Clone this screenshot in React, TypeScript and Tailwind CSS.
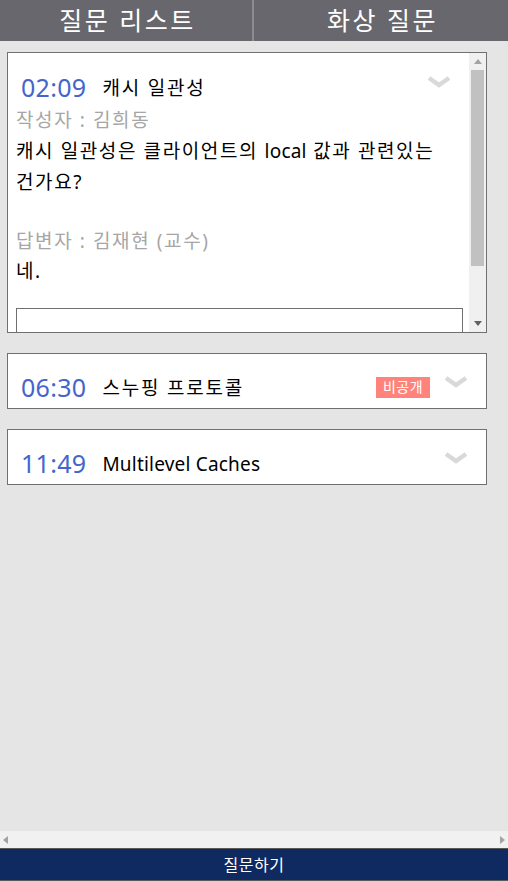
import React from 'react'

const font = { fontFamily: '"Noto Sans", "Noto Sans CJK KR", sans-serif' }

function Chevron() {
  return (
    <svg width="24" height="14" viewBox="0 0 24 14" className="shrink-0">
      <path d="M2 3 L12 10 L22 3" fill="none" stroke="#d9d9d9" strokeWidth="4.5" strokeLinejoin="miter" />
    </svg>
  )
}

function Badge() {
  return (
    <span className="inline-flex items-center justify-center h-[21px] w-[54px] bg-[#ff837a] text-white text-[14px] leading-none tracking-[0.5px]">
      비공개
    </span>
  )
}

function HeadRow({ time, title, secret, latin }: { time: string; title: string; secret?: boolean; latin?: boolean }) {
  return (
    <div className="flex items-center h-[32px]">
      <span className="text-[25px] text-[#4466cc] leading-none ml-[5px] tracking-[0.3px]">{time}</span>
      <span className={latin ? 'text-[19px] text-black ml-[16px] mt-[3px] tracking-[0.2px]' : 'text-[19px] text-black ml-[16px] mt-[2px] tracking-[1.8px]'}>
        {title}
      </span>
      <div className="flex-1" />
      {secret && (
        <div className="mr-[14px] -mt-[2px]">
          <Badge />
        </div>
      )}
      <div className="-mt-[10px]">
        <Chevron />
      </div>
    </div>
  )
}

function VScrollbar() {
  return (
    <div className="w-[17px] bg-[#f0f0f0] flex flex-col items-center shrink-0">
      <div className="h-[17px] flex items-center justify-center">
        <svg width="8" height="5" viewBox="0 0 8 5">
          <path d="M0 5 L4 0 L8 5 Z" fill="#a3a3a3" />
        </svg>
      </div>
      <div className="w-[13px] h-[196px] bg-[#c1c1c1]" />
      <div className="flex-1" />
      <div className="h-[17px] flex items-center justify-center">
        <svg width="8" height="5" viewBox="0 0 8 5">
          <path d="M0 0 L8 0 L4 5 Z" fill="#606060" />
        </svg>
      </div>
    </div>
  )
}

export default function App() {
  return (
    <div className="h-[881px] w-[508px] flex flex-col bg-[#e5e5e5] overflow-hidden" style={font}>
      {/* Tabs */}
      <div className="h-[41px] flex bg-[#67676d] shrink-0">
        <div className="w-[252px] flex items-center justify-center text-white text-[25px] tracking-[2.5px] pl-[3px]">질문 리스트</div>
        <div className="w-[2px] bg-[#8c8c8f]" />
        <div className="flex-1 flex items-center justify-center text-white text-[25px] tracking-[2.5px] pl-[3px]">화상 질문</div>
      </div>

      {/* List */}
      <div className="flex-1 flex flex-col gap-[20px] px-[7px] pt-[11px] pr-[21px]">
        <div className="h-[281px] border border-[#707070] bg-white flex">
          <div className="flex-1 overflow-hidden pl-[8px] pr-[18px] pt-[18px]">
            <HeadRow time="02:09" title="캐시 일관성" />
            <div className="mt-[2px] text-[19px] leading-[31px] tracking-[1.6px]">
              <div className="text-[#a6a6a6]">작성자 : 김희동</div>
              <div className="text-black whitespace-nowrap">
                캐시 일관성은 클라이언트의 <span className="tracking-[0.2px]">local</span> 값과 관련있는
                <br />
                건가요?
              </div>
            </div>
            <div className="mt-[28px] text-[19px] leading-[30px] tracking-[1.6px]">
              <div className="text-[#a6a6a6]">답변자 : 김재현 (교수)</div>
              <div className="text-black">네.</div>
            </div>
            <div className="mt-[22px] h-[34px] border border-[#707070] w-[447px]" />
          </div>
          <VScrollbar />
        </div>

        <div className="h-[56px] border border-[#707070] bg-white pl-[8px] pr-[18px] pt-[17px]">
          <HeadRow time="06:30" title="스누핑 프로토콜" secret />
        </div>

        <div className="h-[56px] border border-[#707070] bg-white pl-[8px] pr-[18px] pt-[17px]">
          <HeadRow time="11:49" title="Multilevel Caches" latin />
        </div>
      </div>

      {/* Horizontal scrollbar */}
      <div className="h-[17px] bg-[#f1f1f1] flex items-center justify-between px-[3px] shrink-0">
        <svg width="5" height="8" viewBox="0 0 5 8">
          <path d="M5 0 L0 4 L5 8 Z" fill="#a3a3a3" />
        </svg>
        <svg width="5" height="8" viewBox="0 0 5 8">
          <path d="M0 0 L5 4 L0 8 Z" fill="#a3a3a3" />
        </svg>
      </div>

      {/* Ask button */}
      <button className="h-[33px] shrink-0 bg-[#0f2a61] border-t border-b border-[#5a5a5a] text-white text-[16px] tracking-[0.5px] flex items-center justify-center">
        질문하기
      </button>
    </div>
  )
}
